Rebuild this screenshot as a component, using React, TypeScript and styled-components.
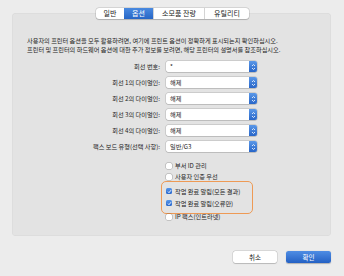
import React from "react";
import styled, { createGlobalStyle } from "styled-components";

const GlobalStyle = createGlobalStyle`
  html, body {
    margin: 0;
    padding: 0;
    background: #ececec;
  }
  body {
    font-family: "Noto Sans CJK KR", "Noto Sans", sans-serif;
    color: #222;
  }
`;

const Window = styled.div`
  width: 344px;
  height: 276px;
  padding-top: 8px;
  box-sizing: border-box;
  display: flex;
  flex-direction: column;
  align-items: flex-start;
`;

const TabBar = styled.div`
  align-self: center;
  margin-left: 1px;
  display: flex;
  height: 11px;
  background: #fff;
  border-radius: 3px;
  box-shadow: 0 0 0 0.5px rgba(0, 0, 0, 0.18), 0 0.5px 1px rgba(0, 0, 0, 0.15);
  position: relative;
  z-index: 1;
`;

const Tab = styled.div<{ $active?: boolean; $w: number }>`
  width: ${(p) => p.$w}px;
  display: flex;
  align-items: center;
  justify-content: center;
  font-size: 7px;
  line-height: 1;
  color: ${(p) => (p.$active ? "#fff" : "#222")};
  background: ${(p) => (p.$active ? "linear-gradient(#4a8ae0, #2766c6)" : "transparent")};
  border-left: ${(p) => (p.$active ? "none" : "0.5px solid #d4d4d4")};
  &:first-child {
    border-left: none;
  }
`;

const Panel = styled.div`
  margin: -6px 0 0 12px;
  width: 319px;
  height: 223px;
  box-sizing: border-box;
  background: #e3e3e3;
  border-radius: 4px;
  box-shadow: inset 0 0 0 0.5px rgba(0, 0, 0, 0.05);
  padding-top: 24px;
  display: flex;
  flex-direction: column;
`;

const Intro = styled.p`
  margin: 0 0 7px 15px;
  font-size: 6.2px;
  line-height: 8.5px;
  color: #222;
  white-space: nowrap;
`;

const Form = styled.div`
  display: grid;
  grid-template-columns: 148px 91px;
  column-gap: 6px;
  row-gap: 5px;
  align-items: center;
`;

const Label = styled.div`
  text-align: right;
  font-size: 6.2px;
  line-height: 11px;
  white-space: nowrap;
`;

const Select = styled.div`
  height: 11px;
  background: #fff;
  border-radius: 2px;
  box-shadow: 0 0 0 0.5px rgba(0, 0, 0, 0.2), 0 0.5px 0.5px rgba(0, 0, 0, 0.15);
  display: flex;
  align-items: center;
  font-size: 6.2px;
  padding-left: 4px;
`;

const SelectValue = styled.span`
  flex: 1;
`;

const Stepper = styled.div`
  width: 8px;
  height: 11px;
  border-radius: 0 2px 2px 0;
  background: linear-gradient(#5b98e8, #2866c8);
  display: flex;
  align-items: center;
  justify-content: center;
`;

const Checks = styled.div`
  margin: 8px 0 0 142px;
  display: flex;
  flex-direction: column;
  align-items: flex-start;
`;

const CheckRow = styled.label`
  display: flex;
  align-items: center;
  gap: 3px;
  height: 11px;
  padding-left: 12px;
  font-size: 6.2px;
  white-space: nowrap;
`;

const Box = styled.span<{ $on?: boolean }>`
  width: 6px;
  height: 6px;
  border-radius: 1.5px;
  background: ${(p) => (p.$on ? "linear-gradient(#5796ea, #2a68cc)" : "#fff")};
  box-shadow: ${(p) => (p.$on ? "none" : "0 0 0 0.5px rgba(0,0,0,0.28)")};
  display: flex;
  align-items: center;
  justify-content: center;
`;

const Highlight = styled.div`
  margin: -1px 0 -3px 7px;
  width: 92px;
  box-sizing: border-box;
  height: 33px;
  border: 1px solid #ee9a55;
  border-radius: 5px;
  padding: 3px 0 0 4px;
  display: flex;
  flex-direction: column;
  & > label {
    padding-left: 0;
    height: 12px;
  }
`;

const Footer = styled.div`
  margin: 15px 0 0 233px;
  display: flex;
  gap: 9px;
`;

const Button = styled.button<{ $primary?: boolean }>`
  width: ${(p) => (p.$primary ? 45 : 44)}px;
  height: 12px;
  padding: 0;
  border: none;
  border-radius: 2.5px;
  font-family: inherit;
  font-size: 6.5px;
  line-height: 1;
  color: ${(p) => (p.$primary ? "#fff" : "#222")};
  background: ${(p) => (p.$primary ? "linear-gradient(#4f8de4, #2461c4)" : "#fff")};
  box-shadow: ${(p) =>
    p.$primary
      ? "0 0.5px 1px rgba(0,0,0,0.25)"
      : "0 0 0 0.5px rgba(0,0,0,0.15), 0 0.5px 1px rgba(0,0,0,0.15)"};
`;

const Arrows = () => (
  <svg width="5" height="8" viewBox="0 0 5 8">
    <path d="M1 3 L2.5 1.5 L4 3 M1 5 L2.5 6.5 L4 5" fill="none" stroke="#fff" strokeWidth="0.8" />
  </svg>
);

const Tick = () => (
  <svg width="5" height="5" viewBox="0 0 5 5">
    <path d="M1 2.6 L2 3.7 L4 1.2" fill="none" stroke="#fff" strokeWidth="0.9" />
  </svg>
);

const rows: [string, string][] = [
  ["회선 번호:", "*"],
  ["회선 1의 다이얼인:", "해제"],
  ["회선 2의 다이얼인:", "해제"],
  ["회선 3의 다이얼인:", "해제"],
  ["회선 4의 다이얼인:", "해제"],
  ["팩스 보드 유형(선택 사항):", "일반/G3"],
];

function Check({ on, children }: { on?: boolean; children: React.ReactNode }) {
  return (
    <CheckRow>
      <Box $on={on}>{on && <Tick />}</Box>
      {children}
    </CheckRow>
  );
}

export default function App() {
  return (
    <>
      <GlobalStyle />
      <Window>
        <TabBar>
          <Tab $w={28}>일반</Tab>
          <Tab $w={29} $active>
            옵션
          </Tab>
          <Tab $w={50}>소모품 잔량</Tab>
          <Tab $w={44}>유틸리티</Tab>
        </TabBar>
        <Panel>
          <Intro>
            사용자의 프린터 옵션을 모두 활용하려면, 여기에 프린트 옵션이 정확하게 표시되는지 확인하십시오.
            <br />
            프린터 및 프린터의 하드웨어 옵션에 대한 추가 정보를 보려면, 해당 프린터의 설명서를 참조하십시오.
          </Intro>
          <Form>
            {rows.map(([label, value]) => (
              <React.Fragment key={label}>
                <Label>{label}</Label>
                <Select>
                  <SelectValue>{value}</SelectValue>
                  <Stepper>
                    <Arrows />
                  </Stepper>
                </Select>
              </React.Fragment>
            ))}
          </Form>
          <Checks>
            <Check>부서 ID 관리</Check>
            <Check>사용자 인증 우선</Check>
            <Highlight>
              <Check on>작업 완료 알림(모든 결과)</Check>
              <Check on>작업 완료 알림(오류만)</Check>
            </Highlight>
            <Check>IP 팩스(인트라넷)</Check>
          </Checks>
        </Panel>
        <Footer>
          <Button>취소</Button>
          <Button $primary>확인</Button>
        </Footer>
      </Window>
    </>
  );
}
